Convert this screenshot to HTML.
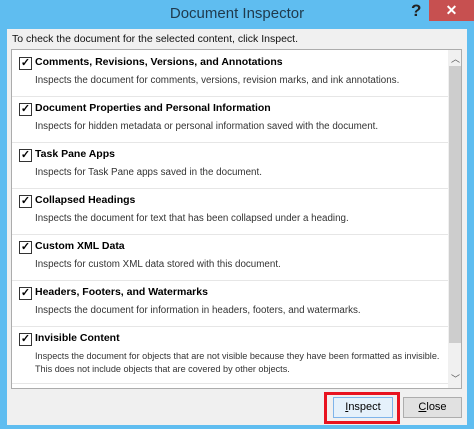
<!DOCTYPE html><html><head><style>
body{margin:0;width:474px;height:429px;background:#5fbdf0;font-family:"Liberation Sans",sans-serif;overflow:hidden;position:relative}
.title{position:absolute;left:0;top:0;width:474px;height:30px;text-align:center;line-height:28px;font-size:15px;color:#1f3a4d}
.q{position:absolute;left:411px;top:1px;font-size:17px;font-weight:bold;color:#222}
.x{position:absolute;left:429px;top:0;width:45px;height:21px;background:#c75050;color:#fff;text-align:center;font-size:14px;line-height:20px;font-weight:bold}
.body{position:absolute;left:7px;top:29px;width:460px;height:396px;background:#f0f0f0}
.inst{position:absolute;left:12px;top:33px;font-size:10.5px;color:#111}
.list{position:absolute;left:11px;top:49px;width:451px;height:340px;background:#fff;border:1px solid #acacac;box-sizing:border-box;overflow:hidden}
.sb{position:absolute;left:436px;top:0;width:15px;height:338px;background:#f0f0f0}
.thumb{position:absolute;left:1px;top:16px;width:13px;height:277px;background:#cdcdcd}
.arr{position:absolute;left:3px;font-size:9px;color:#555}
.item{position:absolute;left:0;width:436px;height:46px;border-bottom:1px solid #e6e6e6}
.cb{position:absolute;left:7px;top:7px;width:11px;height:11px;border:1px solid #333;background:#fff;font-size:11px;line-height:11px;text-align:center;font-weight:bold}
.t{position:absolute;left:23px;top:6px;font-size:10.5px;font-weight:bold;color:#000}
.d{position:absolute;left:23px;top:24px;font-size:9.8px;color:#333;line-height:13px;white-space:nowrap}
.btn{position:absolute;top:397px;height:21px;border:1px solid #adadad;background:#e1e1e1;box-sizing:border-box;font-size:11px;text-align:center;line-height:19px;color:#000}
.red{position:absolute;left:324px;top:392px;width:76px;height:32px;border:3px solid #e8131f;box-sizing:border-box}
</style></head><body>
<div class="title">Document Inspector</div><div class="q">?</div><div class="x">✕</div>
<div class="body"></div>
<div class="inst">To check the document for the selected content, click Inspect.</div>
<div class="list">
<div class="item" style="top:0"><div class="cb">✓</div><div class="t">Comments, Revisions, Versions, and Annotations</div><div class="d">Inspects the document for comments, versions, revision marks, and ink annotations.</div></div>
<div class="item" style="top:46px"><div class="cb">✓</div><div class="t">Document Properties and Personal Information</div><div class="d">Inspects for hidden metadata or personal information saved with the document.</div></div>
<div class="item" style="top:92px"><div class="cb">✓</div><div class="t">Task Pane Apps</div><div class="d">Inspects for Task Pane apps saved in the document.</div></div>
<div class="item" style="top:138px"><div class="cb">✓</div><div class="t">Collapsed Headings</div><div class="d">Inspects the document for text that has been collapsed under a heading.</div></div>
<div class="item" style="top:184px"><div class="cb">✓</div><div class="t">Custom XML Data</div><div class="d">Inspects for custom XML data stored with this document.</div></div>
<div class="item" style="top:230px"><div class="cb">✓</div><div class="t">Headers, Footers, and Watermarks</div><div class="d">Inspects the document for information in headers, footers, and watermarks.</div></div>
<div class="item" style="top:276px;height:57px"><div class="cb">✓</div><div class="t">Invisible Content</div><div class="d" style="font-size:9.1px">Inspects the document for objects that are not visible because they have been formatted as invisible.<br>This does not include objects that are covered by other objects.</div></div>
<div class="sb"><div class="arr" style="top:2px">︿</div><div class="thumb"></div><div class="arr" style="top:322px">﹀</div></div>
</div>
<div class="btn" style="left:333px;width:60px;border-color:#7eb4ea;background:#e5f1fb"><u>I</u>nspect</div>
<div class="btn" style="left:403px;width:59px"><u>C</u>lose</div>
<div class="red"></div>
</body></html>
